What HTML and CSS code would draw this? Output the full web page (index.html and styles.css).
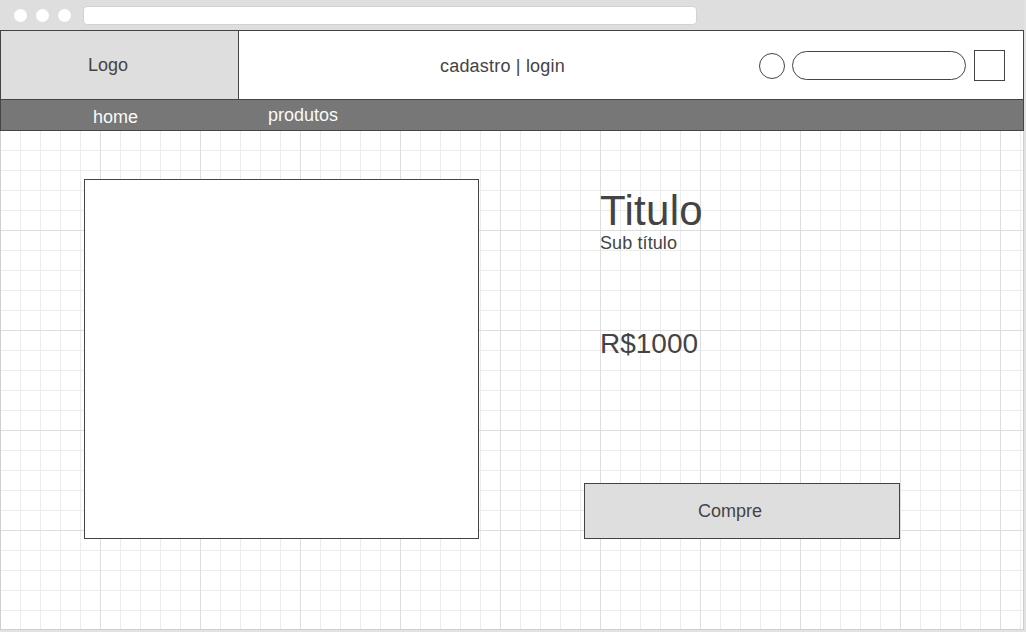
FILE: index.html
```html
<!DOCTYPE html>
<html lang="pt">
<head>
<meta charset="utf-8">
<title>Wireframe</title>
<link rel="stylesheet" href="styles.css">
</head>
<body>
<div class="window">
  <div class="chrome">
    <div class="dots"><span class="dot"></span><span class="dot"></span><span class="dot"></span></div>
    <div class="address"></div>
  </div>
  <header class="header">
    <div class="logo">Logo</div>
    <div class="auth">cadastro | login</div>
    <div class="tools">
      <span class="tool-circle"></span>
      <span class="tool-pill"></span>
      <span class="tool-square"></span>
    </div>
  </header>
  <nav class="nav">
    <span class="nav-item nav-home">home</span>
    <span class="nav-item nav-prod">produtos</span>
  </nav>
  <main class="content">
    <div class="product">
      <div class="photo"></div>
      <div class="info">
        <div class="title">Titulo</div>
        <div class="subtitle">Sub título</div>
        <div class="price">R$1000</div>
        <div class="buy">Compre</div>
      </div>
    </div>
  </main>
</div>
</body>
</html>
```

FILE: styles.css
```css
* { box-sizing: border-box; }
html, body { margin: 0; padding: 0; }
body {
  background: #e2e2e2;
  font-family: "Liberation Sans", Arial, sans-serif;
  color: #444;
  width: 1026px;
  height: 632px;
  overflow: hidden;
}
.window {
  width: 1024px;
  height: 630px;
  display: flex;
  flex-direction: column;
  background: #fff;
}
.chrome {
  height: 30px;
  background: #dedede;
  display: flex;
  align-items: flex-start;
  padding-left: 14px;
}
.dots {
  display: flex;
  gap: 9px;
  margin-top: 9px;
}
.dot {
  width: 13px;
  height: 13px;
  border-radius: 50%;
  background: #fff;
}
.address {
  margin-left: 12px;
  margin-top: 6px;
  width: 614px;
  height: 19px;
  background: #fff;
  border-radius: 4px;
  border: 1px solid #d2d2d2;
}
.header {
  height: 70px;
  border: 1px solid #444;
  display: flex;
  align-items: center;
  background: #fff;
}
.logo {
  width: 238px;
  height: 100%;
  background: #dedede;
  border-right: 1px solid #444;
  display: flex;
  align-items: center;
  padding-left: 87px;
  font-size: 18px;
}
.auth {
  margin-left: 201px;
  font-size: 18px;
  letter-spacing: 0.2px;
  padding-top: 2px;
}
.tools {
  margin-left: auto;
  margin-right: 18px;
  display: flex;
  align-items: center;
}
.tool-circle {
  width: 26px;
  height: 26px;
  border: 1px solid #444;
  border-radius: 50%;
  margin-top: 1px;
}
.tool-pill {
  margin-left: 7px;
  width: 174px;
  height: 29px;
  border: 1px solid #444;
  border-radius: 15px;
}
.tool-square {
  margin-left: 8px;
  width: 31px;
  height: 31px;
  border: 1px solid #444;
}
.nav {
  height: 31px;
  background: #777;
  border-left: 1px solid #444;
  border-right: 1px solid #444;
  border-bottom: 1px solid #444;
  display: flex;
  align-items: flex-start;
  color: #fafafa;
  font-size: 18px;
  line-height: 18px;
  padding-left: 92px;
}
.nav-home {
  width: 175px;
  margin-top: 8px;
}
.nav-prod {
  margin-top: 6px;
}
.content {
  flex: 1;
  border-left: 1px solid #cfcfcf;
  border-right: 1px solid #cfcfcf;
  border-bottom: 1px solid #cfcfcf;
  background-color: #fff;
  background-image:
    linear-gradient(to right, transparent 99px, #dedede 99px),
    linear-gradient(to bottom, transparent 99px, #dedede 99px),
    linear-gradient(to right, transparent 19px, #ececec 19px),
    linear-gradient(to bottom, transparent 19px, #ececec 19px);
  background-size: 100px 100px, 100px 100px, 20px 20px, 20px 20px;
}
.product {
  display: flex;
  align-items: flex-start;
  margin-top: 48px;
  margin-left: 83px;
}
.photo {
  width: 395px;
  height: 360px;
  background: #fff;
  border: 1px solid #444;
}
.info {
  margin-left: 105px;
  display: flex;
  flex-direction: column;
}
.title {
  margin-top: 11px;
  padding-left: 16px;
  font-size: 42px;
  line-height: 42px;
  letter-spacing: 0.3px;
}
.subtitle {
  margin-top: 2px;
  padding-left: 16px;
  font-size: 18px;
  line-height: 18px;
  letter-spacing: 0.1px;
}
.price {
  margin-top: 78px;
  padding-left: 16px;
  font-size: 28px;
  line-height: 28px;
}
.buy {
  margin-top: 125px;
  width: 316px;
  height: 56px;
  background: #dedede;
  border: 1px solid #444;
  display: flex;
  align-items: center;
  padding-left: 113px;
  font-size: 18px;
}
```
